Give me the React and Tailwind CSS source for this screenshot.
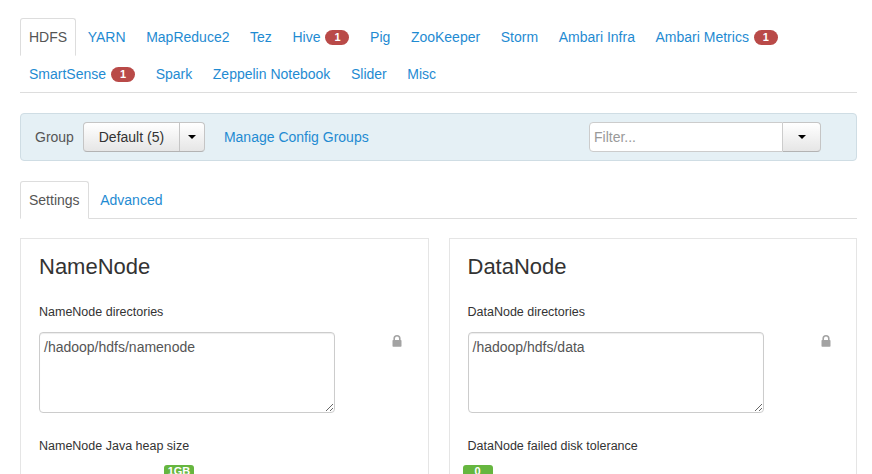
import React from 'react';

const topTabs = [
  [
    { name: 'HDFS', active: true },
    { name: 'YARN' },
    { name: 'MapReduce2' },
    { name: 'Tez' },
    { name: 'Hive', badge: 1 },
    { name: 'Pig' },
    { name: 'ZooKeeper' },
    { name: 'Storm' },
    { name: 'Ambari Infra' },
    { name: 'Ambari Metrics', badge: 1 },
  ],
  [
    { name: 'SmartSense', badge: 1 },
    { name: 'Spark' },
    { name: 'Zeppelin Notebook' },
    { name: 'Slider' },
    { name: 'Misc' },
  ],
];

function Caret() {
  return <span className="inline-block w-0 h-0 border-x-[4px] border-x-transparent border-t-[4px] border-t-black" />;
}

function Tab({ name, active, badge }) {
  return (
    <div
      className={`-mb-px mr-[2.6px] flex items-center h-[38px] px-2 border rounded-t-[3px] text-[14px] leading-5 ${
        active ? 'border-[#ddd] border-b-white bg-white text-[#555]' : 'border-transparent text-[#1f8bd2]'
      }`}
    >
      {name}
      {badge && (
        <span className="ml-[5px] inline-flex items-center justify-center w-6 h-[15px] rounded-full bg-[#b94a48] text-white text-[11px] font-bold leading-none">
          {badge}
        </span>
      )}
    </div>
  );
}

function Lock() {
  return (
    <svg width="10" height="12" viewBox="0 0 10 12" className="shrink-0">
      <path d="M2.2 5.2V3.6a2.8 2.8 0 0 1 5.6 0v1.6" fill="none" stroke="#a3a3a3" strokeWidth="1.6" />
      <rect x="0.5" y="5" width="9" height="6.8" rx="0.8" fill="#a3a3a3" />
    </svg>
  );
}

function Card({ title, label, value, label2, badge, badgeOffset }) {
  return (
    <div className="border border-[#e5e5e5] pt-[16px] px-[18px] h-[240px] overflow-hidden">
      <div className="text-[22px] leading-6 text-[#333]">{title}</div>
      <div className="mt-[24px] text-[12.5px] leading-[18px] text-[#333]">{label}</div>
      <div className="mt-[11px] flex items-start">
        <textarea
          defaultValue={value}
          className="w-[296px] h-[81px] border border-[#ccc] rounded-[4px] pl-[4px] pt-[4px] text-[14px] leading-5 text-[#555] shadow-[inset_0_1px_1px_rgba(0,0,0,0.075)] outline-none resize-y"
        />
        <div className="ml-[57px] mt-[3px]">
          <Lock />
        </div>
      </div>
      <div className="mt-[24px] text-[12.5px] leading-[18px] text-[#333]">{label2}</div>
      <div className="mt-[10px] flex">
        <span
          className={`${badgeOffset} inline-flex items-start justify-center w-[30px] h-[16px] rounded-[3px] bg-[#66b63f] text-white text-[11px] font-bold leading-[13px]`}
        >
          {badge}
        </span>
      </div>
    </div>
  );
}

export default function App() {
  return (
    <div className="w-[872px] h-[474px] overflow-hidden bg-white pt-[18px] px-5 font-['Liberation_Sans',Arial,sans-serif]">
      <div className="w-[837px]">
        {/* service tabs */}
        <div className="border-b border-[#ddd]">
          {topTabs.map((row, i) => (
            <div key={i} className="flex">
              {row.map((t) => (
                <Tab key={t.name} {...t} />
              ))}
            </div>
          ))}
        </div>

        {/* group bar */}
        <div className="mt-5 flex items-center h-[48px] border border-[#cfdde4] bg-[#e5f0f5] rounded-[4px] pl-[14px] pr-[35px]">
          <span className="text-[14px] text-[#555]">Group</span>
          <div className="ml-[9px] flex h-[30px] rounded-[4px] border border-[#c5c5c5] border-b-[#b3b3b3] bg-linear-to-b from-white to-[#e6e6e6] text-[14px] text-[#333]">
            <div className="flex items-center px-[14px] w-[95px] justify-center">Default (5)</div>
            <div className="flex items-center justify-center w-[25px] border-l border-[#c5c5c5]">
              <Caret />
            </div>
          </div>
          <span className="ml-[19px] text-[14px] text-[#1f8bd2]">Manage Config Groups</span>
          <div className="ml-auto flex h-[30px]">
            <div className="w-[194px] border border-[#ccc] rounded-l-[4px] bg-white flex items-center pl-[4px] text-[14px] text-[#999]">
              Filter...
            </div>
            <div className="w-[38px] flex items-center justify-center border border-l-0 border-[#c5c5c5] border-b-[#b3b3b3] rounded-r-[4px] bg-linear-to-b from-white to-[#e6e6e6]">
              <Caret />
            </div>
          </div>
        </div>

        {/* settings tabs */}
        <div className="mt-5 flex border-b border-[#ddd]">
          <Tab name="Settings" active />
          <Tab name="Advanced" />
        </div>

        {/* cards */}
        <div className="mt-[19px] grid grid-cols-2 gap-x-[20px]">
          <Card
            title="NameNode"
            label="NameNode directories"
            value="/hadoop/hdfs/namenode"
            label2="NameNode Java heap size"
            badge="1GB"
            badgeOffset="ml-[125px]"
          />
          <Card
            title="DataNode"
            label="DataNode directories"
            value="/hadoop/hdfs/data"
            label2="DataNode failed disk tolerance"
            badge="0"
            badgeOffset="-ml-[5px]"
          />
        </div>
      </div>
    </div>
  );
}
